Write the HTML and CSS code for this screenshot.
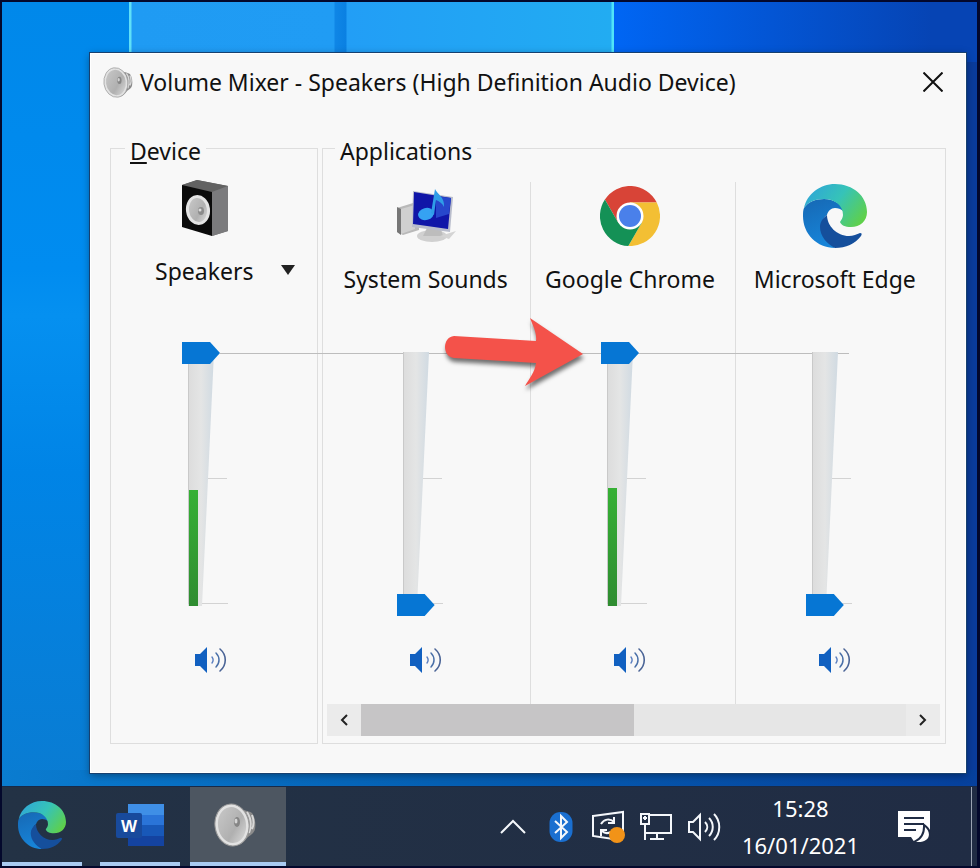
FILE: index.html
```html
<!DOCTYPE html>
<html lang="en">
<head>
    <meta charset="UTF-8">
    <meta name="viewport" content="width=device-width, initial-scale=1.0">
    <title>Volume Mixer</title>
    <link rel="stylesheet" href="styles.css">
</head>
<body>
    <!-- shared shapes -->
    <svg class="defs" width="0" height="0" aria-hidden="true">
        <defs>
            <linearGradient id="edgeGreen" x1="0" y1="0.2" x2="1" y2="0.7">
                <stop offset="0" stop-color="#2fa6d8"/>
                <stop offset="0.5" stop-color="#36c3b8"/>
                <stop offset="1" stop-color="#5fd04a"/>
            </linearGradient>
            <linearGradient id="edgeBlue" x1="0" y1="0" x2="0.3" y2="1">
                <stop offset="0" stop-color="#1668b4"/>
                <stop offset="1" stop-color="#1784d8"/>
            </linearGradient>
            <linearGradient id="wedge" x1="0" y1="0" x2="1" y2="0">
                <stop offset="0" stop-color="#dcdcdc"/>
                <stop offset="0.5" stop-color="#e4e5e5"/>
                <stop offset="1" stop-color="#d0dae2"/>
            </linearGradient>
            <linearGradient id="meter" x1="0" y1="0" x2="0" y2="1">
                <stop offset="0" stop-color="#36b035"/>
                <stop offset="1" stop-color="#2f8c31"/>
            </linearGradient>
            <linearGradient id="cone" x1="0" y1="0" x2="1" y2="1">
                <stop offset="0" stop-color="#c9c9c9"/>
                <stop offset="0.6" stop-color="#b0b0b0"/>
                <stop offset="1" stop-color="#dedede"/>
            </linearGradient>
        </defs>
        <symbol id="edge" viewBox="0 0 64 64">
            <path fill="url(#edgeBlue)" d="M1 24C5 18 12 15 21 15c10 0 19 6 19 12-2-2-5-3-8-3-4 0-7 3-8 7-6 4-8 15 0 25l8 8C14 64 0 50 0 32c0-3 0-6 1-8z"/>
            <path fill="#154f9c" d="M24 31c0 11 10 21 22 21 4 0 8-2 11-3 2 0 2 1 1 3-6 8-15 12-26 12-8-4-15-12-15-21 0-5 3-9 7-12z"/>
            <path fill="url(#edgeGreen)" d="M1 24C4 10 17 0 32 0c18 0 32 12 32 28 0 9-7 15-16 15-6 0-10-2-11-5 1-2 3-4 3-7 0-10-9-16-19-16-9 0-16 3-20 9z"/>
        </symbol>
        <symbol id="horn" viewBox="0 0 42 44">
            <path fill="#8b8b8b" d="M24 5c5 3 10 2 14 5 3 4 4 11 3 16-1 5-5 6-8 9-2 3-5 6-9 7z"/>
            <path fill="none" stroke="#d8d8d8" stroke-width="2" d="M33 9c4 6 5 13 2 21M38 12c2 5 2 10 0 14"/>
            <ellipse cx="18" cy="22" rx="17" ry="21" transform="rotate(-8 18 22)" fill="#e2e2e2" stroke="#9a9a9a" stroke-width="1"/>
            <ellipse cx="18" cy="22" rx="14" ry="18" transform="rotate(-8 18 22)" fill="url(#cone)"/>
            <ellipse cx="23" cy="19" rx="3" ry="5" fill="#858585"/>
            <ellipse cx="22" cy="18" rx="1.500" ry="2.500" fill="#d4d4d4"/>
        </symbol>
        <symbol id="track" viewBox="0 0 58 274">
            <path fill="url(#wedge)" d="M6 10h26L20 264H6z"/>
            <path fill="none" stroke="#c9c9c9" d="M6.500 10v252"/>
            <path fill="none" stroke="#d3d3d3" d="M26 136.500h19M20 261.500h26"/>
        </symbol>
        <symbol id="sound" viewBox="0 0 32 26">
            <path fill="#1160c0" d="M0 7h5l7-7v26l-7-7H0z"/>
            <g fill="none" stroke-linecap="round">
                <path stroke="#5b7fc0" stroke-width="1.400" d="M17 10c1.500 2 1.500 4 0 6"/>
                <path stroke="#4a70a8" stroke-width="1.500" d="M21 6c4 4 4 10 0 14"/>
                <path stroke="#4a6496" stroke-width="1.600" d="M25 2c7 6 7 16 0 22"/>
            </g>
        </symbol>
    </svg>

    <main class="desktop">
        <section class="window">
            <header class="title-bar">
                <svg class="title-icon" width="30" height="31"><use href="#horn"/></svg>
                <h1>Volume Mixer - Speakers (High Definition Audio Device)</h1>
                <button class="close" type="button" aria-label="Close">
                    <svg width="20" height="20" viewBox="0 0 20 20"><path d="M0.500 0.500l19 19M19.500 0.500l-19 19"/></svg>
                </button>
            </header>

            <div class="mixer">
                <fieldset class="group device">
                    <legend><u>D</u>evice</legend>
                    <div class="channel">
                        <div class="app-icon">
                            <svg width="48" height="56" viewBox="0 0 48 56">
                                <path fill="#6b6b6b" d="M1 5L16 0l31 6v45l-16 5z"/>
                                <path fill="#626262" d="M1 5L16 0l31 6-16 6z"/>
                                <path fill="#7b7b7d" d="M31 12l16-6v45l-16 5z"/>
                                <path fill="#0b0b0b" d="M1 5l30 7v44L1 47z"/>
                                <ellipse cx="17" cy="30" rx="12" ry="15" fill="#e4e4e4" transform="rotate(-8 17 30)"/>
                                <ellipse cx="17" cy="30" rx="9" ry="12" fill="url(#cone)" transform="rotate(-8 17 30)"/>
                                <ellipse cx="20" cy="31" rx="3" ry="4" fill="#8b8b8b"/>
                                <circle cx="19" cy="30" r="1.500" fill="#ddd"/>
                            </svg>
                        </div>
                        <div class="device-picker">
                            <select aria-label="Playback device">
                                <option>Speakers</option>
                            </select>
                        </div>
                        <div class="slider">
                            <svg width="58" height="274"><use href="#track"/><path fill="url(#meter)" d="M7 148h9v116H7z"/></svg>
                            <input type="range" min="0" max="100" value="100" aria-label="Speakers volume">
                        </div>
                        <button class="mute" type="button" aria-label="Mute Speakers"><svg width="32" height="26"><use href="#sound"/></svg></button>
                    </div>
                </fieldset>

                <fieldset class="group apps">
                    <legend>Applications</legend>
                    <div class="channels">
                        <div class="channel">
                            <div class="app-icon">
                                <svg width="62" height="56" viewBox="0 0 62 56">
                                    <path fill="#b9b9b9" d="M2 20l16-5 6 3v24L8 47l-6-3z"/>
                                    <path fill="#777" d="M2 19l4 2v26l-4-3z"/>
                                    <path fill="#d0d0d0" d="M6 21l14-4v24L6 46z"/>
                                    <ellipse cx="37" cy="48" rx="15" ry="6" fill="#d0d0d0"/>
                                    <path fill="#bdbdbd" d="M33 38h12l3 10H28z"/>
                                    <path fill="#d4d4d4" d="M45 48l16-5-7 8z"/>
                                    <path fill="#b9bdcc" d="M18 3l40 6-3 35-38-5z"/>
                                    <path fill="#1016a8" d="M19 4l37 6-3 31-35-5z"/>
                                    <path fill="#2747cc" d="M41 8l15 2-2 16-13 4z"/>
                                    <ellipse cx="31" cy="26" rx="8" ry="6" fill="#35a2f2" transform="rotate(-15 31 26)"/>
                                    <path fill="#2f9de8" d="M36 25l4-24c2 5 10 8 9 18-2-4-5-6-8-7l-2 15z"/>
                                </svg>
                            </div>
                            <span class="name">System Sounds</span>
                            <div class="slider">
                                <svg width="58" height="274"><use href="#track"/></svg>
                                <input type="range" min="0" max="100" value="0" aria-label="System Sounds volume">
                            </div>
                            <button class="mute" type="button" aria-label="Mute System Sounds"><svg width="32" height="26"><use href="#sound"/></svg></button>
                        </div>
                        <div class="channel">
                            <div class="app-icon">
                                <svg width="60" height="60" viewBox="0 0 60 60">
                                    <path fill="#d84437" d="M4.900 13.500A30 30 0 0 1 56.800 16.500H30L18.300 36.700z"/>
                                    <path fill="#f3bf34" d="M56.800 16.500A30 30 0 0 1 28.300 60L41.700 36.700 30 16.500z"/>
                                    <path fill="#149156" d="M28.300 60A30 30 0 0 1 4.900 13.500L18.300 36.700H41.700z"/>
                                    <circle cx="30" cy="30" r="13.500" fill="#fff"/>
                                    <circle cx="30" cy="30" r="11" fill="#4a80ea"/>
                                </svg>
                            </div>
                            <span class="name">Google Chrome</span>
                            <div class="slider">
                                <svg width="58" height="274"><use href="#track"/><path fill="url(#meter)" d="M7 146h9v118H7z"/></svg>
                                <input type="range" min="0" max="100" value="100" aria-label="Google Chrome volume">
                            </div>
                            <button class="mute" type="button" aria-label="Mute Google Chrome"><svg width="32" height="26"><use href="#sound"/></svg></button>
                        </div>
                        <div class="channel">
                            <div class="app-icon"><svg width="64" height="64"><use href="#edge"/></svg></div>
                            <span class="name">Microsoft Edge</span>
                            <div class="slider">
                                <svg width="58" height="274"><use href="#track"/></svg>
                                <input type="range" min="0" max="100" value="0" aria-label="Microsoft Edge volume">
                            </div>
                            <button class="mute" type="button" aria-label="Mute Microsoft Edge"><svg width="32" height="26"><use href="#sound"/></svg></button>
                        </div>
                    </div>
                    <div class="scrollbar">
                        <button type="button" aria-label="Scroll left"><svg width="8" height="12" viewBox="0 0 8 12"><path d="M7 1L2 6l5 5"/></svg></button>
                        <div class="scroll-track"><div class="scroll-thumb"></div></div>
                        <button type="button" aria-label="Scroll right"><svg width="8" height="12" viewBox="0 0 8 12"><path d="M1 1l5 5-5 5"/></svg></button>
                    </div>
                </fieldset>

                <div class="level-line"></div>
                <svg class="pointer" width="144" height="76" viewBox="0 0 144 76">
                    <path fill="#f4524a" d="M11 18l82 5c1-8-3-15-6-23l53 36-58 32c4-7 10-14 11-23l-82-5C-1 39-1 19 11 18z"/>
                </svg>
            </div>
        </section>
    </main>

    <footer class="taskbar">
        <nav class="tasks">
            <button class="task" type="button" aria-label="Microsoft Edge"><svg width="48" height="50"><use href="#edge"/></svg></button>
            <button class="task" type="button" aria-label="Word">
                <svg width="48" height="44" viewBox="0 0 48 44">
                    <path fill="#3f8fe6" d="M12 1h36v11H12z"/>
                    <path fill="#2a74d8" d="M12 12h36v10H12z"/>
                    <path fill="#1858b8" d="M12 22h36v11H12z"/>
                    <path fill="#1443a0" d="M12 33h36v10H12z"/>
                    <rect y="10" width="26" height="25" rx="2" fill="#184a9c"/>
                    <text x="13" y="29" text-anchor="middle" class="word-mark">W</text>
                </svg>
            </button>
            <button class="task active" type="button" aria-label="Volume Mixer"><svg width="42" height="44"><use href="#horn"/></svg></button>
        </nav>
        <div class="tray">
            <button class="expand" type="button" aria-label="Show hidden icons">
                <svg width="28" height="16" viewBox="0 0 28 16"><path d="M2 14L14 2l12 12"/></svg>
            </button>
            <button class="bluetooth" type="button" aria-label="Bluetooth">
                <svg width="24" height="32" viewBox="0 0 24 32">
                    <rect x="0.500" y="1" width="23" height="30" rx="11" fill="#1a6fd0"/>
                    <path d="M6 10l12 11-6 6V5l6 6L6 22"/>
                </svg>
            </button>
            <button type="button" aria-label="Updates available">
                <svg width="34" height="34" viewBox="0 0 34 34">
                    <path d="M2 6l30-4v24l-10 3L2 26zM10 14c3-5 9-6 13-2M23 7v6h-6M20 22c-4 2-7 1-9-1M10 26v-6h6"/>
                    <circle cx="26" cy="25" r="8" fill="#f29318"/>
                </svg>
            </button>
            <button type="button" aria-label="Network">
                <svg width="34" height="30" viewBox="0 0 34 30">
                    <path d="M10 3h22v18H6V13M18 21v6M11 27h14M2 2h8v10H2zM6 12v16M4 6h4M6 4v4"/>
                </svg>
            </button>
            <button type="button" aria-label="Volume">
                <svg width="34" height="30" viewBox="0 0 34 30">
                    <path d="M2 10h4l7-7v24l-7-7H2zM18 10c3 3 3 7 0 10M22 6c5 5 5 13 0 18M27 2c7 7 7 19 0 26"/>
                </svg>
            </button>
            <div class="clock"><time>15:28</time><time>16/01/2021</time></div>
            <button type="button" aria-label="Notifications">
                <svg width="34" height="34" viewBox="0 0 34 34">
                    <path class="bubble" d="M1 1h32v26h-9l-6 6-4-6H1z"/>
                    <path class="lines" d="M7 8h20M7 14h20M7 20h12"/>
                    <path class="moon" d="M28 17c7 6 5 16-9 15 6-3 9-8 9-15z"/>
                </svg>
            </button>
            <span class="show-desktop"></span>
        </div>
    </footer>
</body>
</html>
```
FILE: styles.css
```css
* {
    box-sizing: border-box;
}
body {
    margin: 0;
    min-height: 100vh;
    display: flex;
    flex-direction: column;
    border: 2px solid #03082c;
    border-right-width: 3px;
    font-family: "Noto Sans", "Open Sans", sans-serif;
    font-size: 23px;
    line-height: 30px;
    color: #111;
}
button {
    display: flex;
    align-items: center;
    justify-content: center;
    padding: 0;
    border: none;
    background: none;
    cursor: pointer;
}
svg {
    display: block;
}
.defs {
    position: absolute;
}

/* desktop */
.desktop {
    flex: 1;
    display: flex;
    padding: 51px 11px 13px 88px;
    background:
        linear-gradient(90deg, #0a7cd0, #0560b4 45%, #06409c) bottom / 100% 16px no-repeat,
        linear-gradient(90deg, #5fe0f8 2px, #1f9bf3 3px, #209cf4 205px, #0f86e6 206px, #0a80e2 217px, #229ef6 218px, #22acf2 482px, #50e4f8 483px) 127px 0 / 485px 60px no-repeat,
        linear-gradient(90deg, transparent 610px, #0066f4 611px, #0644b4 930px) top / 100% 60px no-repeat,
        linear-gradient(90deg, transparent 50%, #0a3c9c 50%),
        linear-gradient(180deg, #0088ea, #008cf0 34%, #0590f0 40%, #0084e6 60%, #0a7cd2);
}
.window {
    flex: 1;
    display: flex;
    flex-direction: column;
    background: #f8f8f8;
    border: 1px solid #fff;
    box-shadow: 0 0 0 1px #17406f, 0 2px 8px rgba(0, 0, 0, 0.4);
}
.title-bar {
    display: flex;
    align-items: center;
    height: 56px;
    padding: 0 22px 0 12px;
}
.title-icon {
    margin-right: 7px;
}
h1 {
    flex: 1;
    margin: 0;
    font-size: 23px;
    font-weight: normal;
    white-space: nowrap;
}
.close path {
    stroke: #111;
    stroke-width: 2;
}

/* mixer */
.mixer {
    position: relative;
    flex: 1;
    display: flex;
    gap: 4px;
    padding: 20px 19px 28px;
}
.group {
    min-width: 0;
    margin: 0;
    padding: 0;
    border: 1px solid #dedede;
}
legend {
    height: 36px;
    margin-left: 14px;
    padding: 6px 5px 0;
}
.device {
    width: 208px;
}
.apps {
    flex: 1;
    padding: 0 5px 6px 4px;
}
.apps legend {
    margin-left: 8px;
}
.channels {
    display: grid;
    grid-template-columns: repeat(3, 1fr);
    margin-top: 16px;
}
.channel {
    display: flex;
    flex-direction: column;
    align-items: center;
    height: 522px;
    padding-right: 6px;
    border-right: 1px solid #dedede;
}
.channel:last-child {
    border-right: none;
}
.app-icon {
    display: flex;
    align-items: center;
    height: 68px;
    margin-bottom: 14px;
}
.name {
    white-space: nowrap;
}
.device .channel {
    margin-top: 8px;
    border-right: none;
}
.device .app-icon {
    padding-right: 12px;
}
.device-picker {
    position: relative;
    width: 168px;
}
.device-picker select {
    width: 100%;
    height: 30px;
    padding: 0 0 0 28px;
    border: none;
    background: none;
    appearance: none;
    font: inherit;
    color: inherit;
}
.device-picker::after {
    content: "";
    position: absolute;
    right: 0;
    top: 9px;
    width: 14px;
    height: 10px;
    background: #222;
    clip-path: polygon(0 0, 100% 0, 50% 100%);
    pointer-events: none;
}
.slider {
    position: relative;
    z-index: 1;
    margin: 48px 0 31px;
}
.device .slider {
    margin-top: 56px;
}
.slider input {
    position: absolute;
    left: 0;
    top: 0;
    width: 38px;
    height: 274px;
    margin: 0;
    background: none;
    appearance: none;
    writing-mode: vertical-lr;
    direction: rtl;
}
.slider input::-webkit-slider-thumb {
    appearance: none;
    width: 38px;
    height: 22px;
    background: #0676d4;
    clip-path: polygon(0 0, 28px 0, 100% 50%, 28px 100%, 0 100%);
}
/* line at 100% that joins the sliders */
.level-line {
    position: absolute;
    left: 129px;
    right: 116px;
    top: 243px;
    height: 1px;
    background: #bdbdbd;
}
.pointer {
    position: absolute;
    left: 352px;
    top: 208px;
    z-index: 2;
    filter: drop-shadow(1px 4px 2px rgba(0, 0, 0, 0.55));
}

/* scrollbar */
.scrollbar {
    display: flex;
    height: 32px;
    background: #e6e6e6;
}
.scrollbar button {
    width: 34px;
    background: #ebebeb;
}
.scrollbar path {
    fill: none;
    stroke: #222;
    stroke-width: 2;
}
.scroll-track {
    flex: 1;
}
.scroll-thumb {
    width: 50%;
    height: 100%;
    background: #c6c5c6;
}

/* taskbar */
.taskbar {
    display: flex;
    justify-content: space-between;
    height: 80px;
    border-top: 1px solid #182a48;
    background: linear-gradient(90deg, #233245, #202c44);
    color: #fff;
}
.tasks {
    display: flex;
}
.task {
    width: 80px;
    margin-right: 18px;
    border-bottom: 4px solid #a9cbf2;
}
.task:nth-child(2) {
    margin-right: 10px;
}
.task.active {
    width: 96px;
    margin-right: 0;
    padding-right: 6px;
    background: #4d5661;
}
.word-mark {
    font-size: 17px;
    font-weight: bold;
    fill: #fff;
}
.tray {
    display: flex;
    align-items: center;
    gap: 14px;
}
.tray path {
    fill: none;
    stroke: #f4f7fb;
    stroke-width: 2;
}
.expand {
    margin-right: 8px;
}
.bluetooth {
    margin-right: 4px;
}
.tray .bubble {
    fill: #fff;
    stroke: none;
}
.tray .lines {
    stroke: #202c44;
}
.tray .moon {
    fill: #fff;
    stroke: #202c44;
    stroke-width: 4;
    paint-order: stroke;
}
.clock {
    display: flex;
    flex-direction: column;
    align-items: center;
    margin: 0 24px 0 7px;
    font-size: 22px;
    line-height: 37px;
}
.show-desktop {
    width: 6px;
    height: 100%;
    margin-left: 26px;
    border-left: 1px solid #9aa3b2;
}
```
